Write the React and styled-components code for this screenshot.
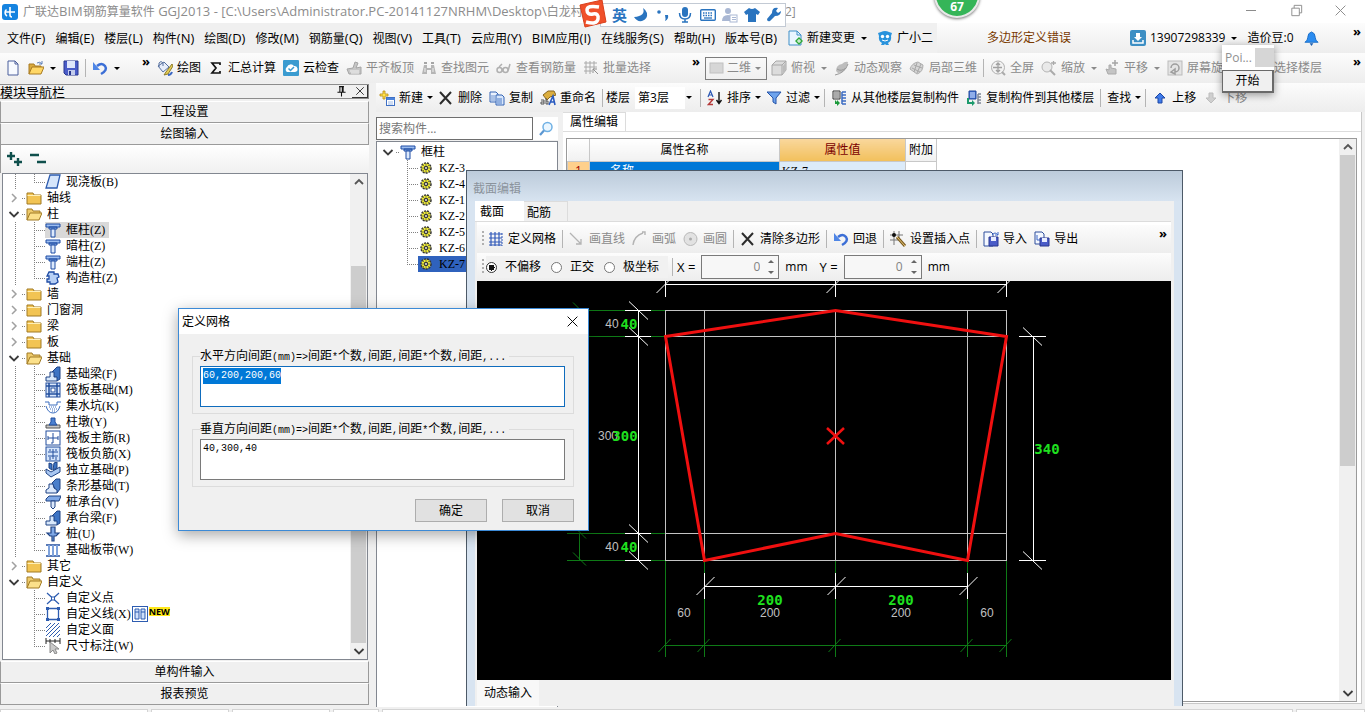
import React, { useEffect, useRef } from 'react'
import styled, { createGlobalStyle, css } from 'styled-components'

// every glyph is drawn on a 16 x 16 box
const glyphs = {
  logo: <><rect width="16" height="16" rx="3" fill="#1583e0" /><path d="M8 3v8a2 2 0 0 0 2 2M3 8h10M4.500 5.500A4 4 0 0 0 5 12" fill="none" stroke="#fff" strokeWidth="1.600" /></>,
  file: <path d="M3 1h7l3 3v11H3z M10 1v3h3" fill="#f7faff" stroke="#4a5f9c" />,
  open: <><path d="M1 14V4h5l1 2h6v2" fill="#d9a93c" stroke="#a87b22" /><path d="M1 14l3-7h12l-3 7z" fill="#ffd766" stroke="#a87b22" /><path d="M9 3q3-2 5 1M14 1v3h-3" fill="none" stroke="#5d7fb8" /></>,
  save: <><path d="M1 1h14v14H3l-2-2z" fill="#4a5cc8" stroke="#28378f" /><path d="M4 1h8v7H4z" fill="#dfe6fb" /><path d="M5 10h7v5H5z" fill="#c3ccec" /><path d="M6 11h2v4H6z" fill="#28378f" /></>,
  undo: <><path d="M5 6q5-4 8 0t-4 8" fill="none" stroke="#3c6fd6" strokeWidth="2.500" /><path d="M1 2v8h7z" fill="#4f86e6" /></>,
  paint: <><path d="M1 6l6-4 5 5-6 5z" fill="#e8eefa" stroke="#56709f" /><path d="M2 7V3q2-3 4 0v3" fill="none" stroke="#56709f" /><path d="M15 4l-6 8-2 3 4-1 5-8z" fill="#e6cf56" stroke="#8c7a2a" /><path d="M11 15q3 0 4-3" stroke="#3966c4" strokeWidth="2" fill="none" /></>,
  sigma: <path d="M12 5V3H4l4 5-4 5h8v-2" fill="none" stroke="#111" strokeWidth="1.700" />,
  cloud: <><rect width="16" height="16" rx="1" fill="#3a9bd0" /><path d="M4 12a3 3 0 0 1 0-5 4 4 0 0 1 7-1 3 3 0 0 1 1 6z" fill="#fff" /><path d="M5.500 8.500l2 2 3.500-3.500" stroke="#3a9bd0" strokeWidth="1.500" fill="none" /></>,
  slab: <><path d="M1 9l6-1 2-6 3 1-2 5 5-1v7H3z" fill="#c6c6c6" stroke="#a5a5a5" /><path d="M4 11h9M5 13h8" stroke="#f4f4f4" /></>,
  binoc: <><path d="M3 5h3v3h4V5h3l2 9h-5v-4H6v4H1z" fill="#b5b5b5" /><path d="M3 2h3v2H3zM10 2h3v2h-3z" fill="#a5a5a5" /><path d="M4 8v4M12 8v4" stroke="#eee" /></>,
  glasses: <path d="M1 10a2.500 2.500 0 1 0 5 0 2.500 2.500 0 1 0-5 0M7 10a2.500 2.500 0 1 0 5 0 2.500 2.500 0 1 0-5 0M3 7l3-3M12 11l2-7" fill="none" stroke="#b0b0b0" strokeWidth="1.500" />,
  batch: <><path d="M1 3h13M1 7h13M1 11h8M3 1v13M7 1v13M11 1v8" stroke="#aaa" /><path d="M10 9l5 5M10 9v4M10 9h4" stroke="#8f8f8f" /></>,
  plane: <rect x="1" y="3" width="13" height="10" fill="#d6d6d6" stroke="#c0c0c0" />,
  cube: <><path d="M1 5l4-4h10v9l-4 5H1z" fill="#dcdcdc" stroke="#a8a8a8" /><path d="M1 5h10v10M11 5l4-4" fill="none" stroke="#a8a8a8" /><path d="M12 6l3-4v8l-3 3z" fill="#bcbcbc" /></>,
  orbit: <><path d="M2 11q0-6 6-7 3-3 6-2 0 3-2 5-2 6-8 6z" fill="#bdbdbd" /><path d="M1 15q10-2 13-11M3 9q4 3 9-1" stroke="#989898" fill="none" /></>,
  local: <><path d="M1 9q2-6 8-7l5 3q0 7-6 9z" fill="#d6d6d6" stroke="#adadad" /><path d="M3 8l8 4M5 5l8 3M8 3l-3 9M12 4l-4 9" stroke="#a8a8a8" /></>,
  fit: <><circle cx="8" cy="7.500" r="6.500" fill="#f2f2f2" stroke="#b0b0b0" /><path d="M8 3v9M3 7.500h9M6 5l2-2 2 2M6 10l2 2 2-2" fill="none" stroke="#a0a0a0" strokeWidth="1.300" /><path d="M12 12l3 3" stroke="#aaa" strokeWidth="2" /></>,
  zoom: <><circle cx="6" cy="7" r="5" fill="#e9e9e9" stroke="#b5b5b5" /><path d="M9 10l5 5" stroke="#aaa" strokeWidth="2" /><path d="M10 3h5M12.500 1v4" stroke="#aaa" strokeWidth="1.300" /></>,
  pan: <><path d="M2 9l3 1V5h2v3l5 1v5H4z" fill="#c4c4c4" stroke="#aaa" /><path d="M8 3h6M11 0v6" stroke="#a5a5a5" strokeWidth="1.500" /></>,
  rotate: <><rect x="1" y="1" width="14" height="14" fill="#e4e4e4" stroke="#bbb" /><path d="M4 8a4 4 0 1 1 4 4M8 9v5l-4-2z" fill="none" stroke="#9d9d9d" strokeWidth="1.500" /></>,
  add: <><path d="M4 1h2v3h3v2H6v3H4V6H1V4h3z" fill="#ffe34d" stroke="#b98b13" strokeWidth=".8" /><rect x="7.500" y="7.500" width="8" height="8" fill="#fff" stroke="#3f70c4" /><path d="M8 8h8v2H8z" fill="#4b83db" /><path d="M9 12h5M9 14h5" stroke="#9cb9e6" /></>,
  del: <path d="M2 2l11 12M13 2L2 14" stroke="#2c2c2c" strokeWidth="2" />,
  copy: <><path d="M1 2h6l2 2v8H1z" fill="#eaf1fd" stroke="#3464b4" /><path d="M2 6h4M2 8h4M2 10h4" stroke="#6d93d0" /><path d="M7 5h6l2 2v8H7z" fill="#d8e6fb" stroke="#3464b4" /><path d="M8 9h5M8 11h5M8 13h5" stroke="#4a7ac6" /></>,
  rename: <><path d="M3 5l5-4h6l2 4-6 2-3 3z" fill="#dcae3e" stroke="#876620" /><path d="M1 10h3v4H1v-2h3M6 8v6h2v-3H6" fill="none" stroke="#555" /><path d="M9 15l4-9 2 9M10 12h5" fill="none" stroke="#2a5bc0" strokeWidth="1.600" /></>,
  sort: <><path d="M1 7l2.500-6L6 7M2 5h3" fill="none" stroke="#2a57b4" strokeWidth="1.200" /><path d="M1.500 9.500H6l-4.500 5H6" fill="none" stroke="#b53a3a" strokeWidth="1.400" /><path d="M12 2v11M9.500 10l2.500 3.500 2.500-3.500" fill="none" stroke="#111" strokeWidth="1.400" /></>,
  funnel: <path d="M1 2h14L10 8v6l-3-2V8z" fill="#6ea3ec" stroke="#2453a8" />,
  copyFrom: <><path d="M2 1h7v8H2z" fill="#eee" stroke="#333" /><path d="M3 3h5M3 5h5M3 7h5" stroke="#666" /><path d="M4 10v4h2v2l3-3-3-3v2z" fill="#1c9a3c" /><path d="M11 2h4M11 5h4M11 8h4M11 11h4M11 14h4M11 2v12" stroke="#3c6cc2" strokeWidth="1.500" /></>,
  copyTo: <><path d="M3 1h7v8H3z" fill="#4274d4" stroke="#20479b" /><path d="M4 3h5M4 5h5M4 7h5" stroke="#dce8ff" /><path d="M1 8h2v4h3v-2l3 3-3 3v-2H1z" fill="#1c9a6c" /><path d="M12 4h3M12 7h3M12 10h3M12 13h3M12 4v10" stroke="#7d8796" strokeWidth="1.500" /></>,
  up: <path d="M8 3l5 5h-3v5H6V8H3z" fill="#3f7bea" stroke="#1d46a4" />,
  down: <path d="M8 13L3 8h3V3h4v5h3z" fill="#cfcfcf" stroke="#bdbdbd" />,
  search: <><circle cx="9.500" cy="6" r="4.500" fill="#eaf6ff" stroke="#6fb0e4" strokeWidth="1.500" /><path d="M6 9.500L2 14" stroke="#5b97d2" strokeWidth="2.200" /></>,
  grid: <><path d="M1 3h13M1 7h13M1 11h13M1 14h13M3 1v14M7 1v14M11 1v14" stroke="#3159b8" strokeWidth="1.200" /><path d="M14 2v13" stroke="#3159b8" strokeDasharray="2 1" /></>,
  line: <path d="M1 2l11 11M12 8v5H7" fill="none" stroke="#b4b4b4" strokeWidth="1.300" />,
  arc: <path d="M1 14q1-9 10-12M10 1h3v3" fill="none" stroke="#b4b4b4" strokeWidth="1.400" />,
  circle: <><circle cx="7.500" cy="8" r="6.500" fill="#e2e2e2" stroke="#b9b9b9" /><circle cx="7.500" cy="8" r="1.500" fill="#aaa" /></>,
  insertPt: <><path d="M0 4h13M0 9h9M4 0v14M9 0v8" stroke="#777" /><circle cx="4" cy="4" r="2" fill="#111" /><path d="M7 6l8 9" stroke="#7a5a1e" strokeWidth="3" /><path d="M7 6l8 9" stroke="#e8c878" /></>,
  importDoc: <><path d="M1 1h7l2 2v12H1z" fill="#f4f8ff" stroke="#2f4f9c" /><path d="M6 6h9v9H6z" fill="#4a5cc8" stroke="#28378f" /><path d="M8 6h5v4H8z" fill="#e8edff" /><path d="M9 4q3-4 6 0M15 1v3h-3" fill="none" stroke="#3a67c8" /></>,
  exportDoc: <><path d="M1 1h7l2 2v10H1z" fill="#f4f8ff" stroke="#2f4f9c" /><path d="M3 4v5h4" fill="none" stroke="#3a67c8" /><path d="M6 7h9v8H6z" fill="#4a5cc8" stroke="#28378f" /><path d="M8 7h5v4H8z" fill="#e8edff" /></>,
  docPlus: <><path d="M2 1h8l4 4v10H2z" fill="#eaf6ff" stroke="#3f8fc8" /><path d="M10 1v4h4" fill="none" stroke="#3f8fc8" /><path d="M12 7l4 4-4 4-4-4z" fill="#2fa83a" /><path d="M12 9v4M10 11h4" stroke="#fff" /></>,
  robot: <><path d="M1 3l3-1q4-2 8 0l3 1-1 3q1 5-3 7l1 2H9l-1-1-1 1H4l1-2q-4-2-3-7z" fill="#2a93dc" /><circle cx="5.500" cy="6.500" r="1.700" fill="#fff" /><circle cx="10.500" cy="6.500" r="1.700" fill="#fff" /><path d="M5 10q3 2 6 0" stroke="#fff" fill="none" /></>,
  account: <><rect width="16" height="16" rx="2" fill="#3d8fc4" /><path d="M6 3h4v4h2l-4 4-4-4h2z" fill="#fff" /><path d="M3 10v3h10v-3" fill="none" stroke="#fff" strokeWidth="1.500" /></>,
  bell: <><path d="M8 1q4 1 4 6 0 3 3 5H1q3-2 3-5 0-5 4-6z" fill="#2b8cf0" stroke="#1d6fc8" /><path d="M6 13h4l-2 3z" fill="#1d5fb0" /></>,
  folder: <><path d="M1 3h6l1 2h7v9H1z" fill="#f2c453" stroke="#a17a24" /><path d="M1.500 5.500h13" stroke="#fff0b8" /></>,
  folderOpen: <><path d="M1 14V3h5l1 2h7v2" fill="#eecb6c" stroke="#a17a24" /><path d="M1 14l3-7h12l-3 7z" fill="#fbe08a" stroke="#a17a24" /></>,
  board: <path d="M5 1h10l-3 13H1z" fill="#d6e6fb" stroke="#2d5cb0" strokeWidth="1.300" />,
  column: <><path d="M1 2h14v3H1z M4 5h8v2H4z" fill="#9cbdf0" stroke="#1f4ca4" /><path d="M6 7h4v8H6z" fill="#dce9fc" stroke="#1f4ca4" /></>,
  gouzao: <path d="M4 2h5v2h4l1 3-2 1 1 4-3 2H5v-2H2V9h2V6H2z" fill="#b7d0f5" stroke="#1f4ca4" strokeWidth="1.300" />,
  beam: <><path d="M6 7l6-6h3v12l-3 2z" fill="#3d74c4" stroke="#1f4384" /><path d="M1 15v-4h4V6h4v5h3v4z" fill="#d8e8fb" stroke="#1f4384" /></>,
  raft: <><rect x="1" y="1" width="14" height="14" fill="#dbe8fb" stroke="#234f9e" /><path d="M4 1v14M12 1v14M1 4h14M1 12h14" stroke="#234f9e" strokeWidth="1.500" /><rect x="6" y="6" width="4" height="4" fill="#fff" stroke="#234f9e" /></>,
  pit: <><path d="M0 4h4v3h8V4h4M1 8q2 7 7 7t7-7" fill="none" stroke="#3d6fc0" /><path d="M4 9h8M5 11h7M7 13h3" stroke="#3d6fc0" strokeDasharray="1 1" /></>,
  pier: <><path d="M1 11h14v3H1z" fill="#c6c6c6" stroke="#555" /><path d="M4 11l2-3V4h4v4l2 3z" fill="#4b80d0" stroke="#234f9e" /></>,
  rebarMain: <><rect x="1" y="1" width="14" height="14" fill="#fff" stroke="#234f9e" /><path d="M3 8h10M8 3v10M3 6v4M13 6v4M6 13h2" stroke="#234f9e" fill="none" /></>,
  rebarNeg: <><rect x="1" y="1" width="14" height="14" fill="#d5e5fb" stroke="#234f9e" /><path d="M3 6h10M3 10h10M8 3v10M5 3v2M11 3v2M5 11v3M11 11v3" stroke="#234f9e" /></>,
  isolated: <><path d="M1 7l5 3 9-5v5l-9 5-5-4z" fill="#a9c7f2" stroke="#1f4384" /><path d="M4 1l3 1v6l-3-2zM9 1l3-1v6L8 8z" fill="#3d74c4" stroke="#1f4384" /></>,
  strip: <><path d="M7 5l4-4h4v10l-3 4z" fill="#4a7fcb" stroke="#1f4384" /><path d="M1 15v-3l3-2V6h4l1 4 3 2v3z" fill="#dce9fc" stroke="#1f4384" /></>,
  pileCap: <><path d="M1 5l3-3h12l-2 5H1z" fill="#7fa8e6" stroke="#1f4384" /><path d="M6 7h4v6l-2 2-2-2z" fill="#dce9fc" stroke="#1f4384" /></>,
  pile: <path d="M6 1h4v6h4l-3 3H9v5H7v-5H5L2 7h4z" fill="#7fa8e6" stroke="#1f4384" strokeWidth="1.200" />,
  band: <><path d="M1 3h14M1 14h14" stroke="#234f9e" strokeWidth="1.500" /><path d="M4 3v11M8 3v11M12 3v11" stroke="#7fa3dc" strokeWidth="2" /></>,
  point: <><path d="M2 3l12 11M14 3L2 14" stroke="#2d5cb0" strokeWidth="1.200" /><rect x="6.500" y="7" width="3" height="3" fill="#fff" stroke="#2d5cb0" /></>,
  polyline: <><path d="M2.500 2.500h11v11h-11z" fill="none" stroke="#2d5cb0" strokeWidth="1.300" /><path d="M1 1h3v3H1zM12 1h3v3h-3zM1 12h3v3H1zM12 12h3v3h-3z" fill="#2d5cb0" /></>,
  hatch: <path d="M1 6l5-5M1 10l9-9M1 14l13-13M4 15L15 4M8 15l7-7M12 15l3-3" stroke="#2d5cb0" />,
  dimension: <><path d="M1 3h14M1 0v6M15 0v6M5 1v4M10 1v4" stroke="#222" /><path d="M5 4v11l3-3 2 4 2-1-2-4h4z" fill="#c9c9c9" stroke="#8a8a8a" /></>,
  twin: <><rect x=".5" y=".5" width="15" height="15" fill="#fff" stroke="#2d5cb0" /><path d="M3 3h4v10H3zM9 3h4v10H9z" fill="#cfe0fa" stroke="#2d5cb0" /><path d="M3 6h4M9 6h4" stroke="#2d5cb0" /></>,
  gear: <><circle cx="8" cy="8" r="5" fill="#f4f02c" stroke="#333" strokeWidth="1.500" strokeDasharray="2 1" /><path d="M8 3v10M3 8h10M4.500 4.500l7 7M11.500 4.500l-7 7" stroke="#555" strokeWidth=".8" /><circle cx="8" cy="8" r="1.500" fill="#fff" stroke="#222" /></>,
  plusPlus: <path d="M0 5h8M4 1v8M7 11h8M11 7v8" stroke="#0f4f4c" strokeWidth="2.400" />,
  minusMinus: <path d="M0 4h9M7 11h9" stroke="#0f4f4c" strokeWidth="2.400" />,
  pin: <path d="M5 2h6M6 2v7M10 2v7M9 2v7M3 9h10M8 9v5" fill="none" stroke="#111" strokeWidth="1.300" />,
  close: <path d="M2 2l12 12M14 2L2 14" stroke="currentColor" strokeWidth="1.200" />,
  minimize: <path d="M3 8.500h10" stroke="currentColor" />,
  restore: <path d="M3 5.500h8v8H3zM5.500 5.500v-3h8v8h-2.500" fill="none" stroke="currentColor" />,
  chevRight: <path d="M6 4l4 4-4 4" fill="none" stroke="#a0a0a0" strokeWidth="1.500" />,
  chevDown: <path d="M3.500 6L8 10.500 12.500 6" fill="none" stroke="#3c3c3c" strokeWidth="1.800" />,
  chevUp: <path d="M4 10l4-4 4 4" fill="none" stroke="#555" strokeWidth="1.800" />,
  moon: <path d="M10 1q3 8-9 9 3 5 8 4 6-2 5-8-1-3-4-5z" fill="#2a74bf" />,
  comma: <><circle cx="4" cy="5" r="1.800" fill="#2a74bf" /><path d="M10 8h3q1 4-3 6 1-2 0-6z" fill="#2a74bf" /></>,
  mic: <><rect x="5" y="0" width="6" height="10" rx="3" fill="#2a74bf" /><path d="M2.500 6q0 6 5.500 6t5.500-6M8 12v3M5 15h6" fill="none" stroke="#2a74bf" strokeWidth="1.500" /></>,
  keyboard: <><rect x=".7" y="2.700" width="14.600" height="10.600" rx="1" fill="#fff" stroke="#2a74bf" strokeWidth="1.400" /><path d="M3 6h10M3 8.500h10" stroke="#2a74bf" strokeWidth="1.500" strokeDasharray="1.500 1" /><path d="M4 11h8" stroke="#2a74bf" strokeWidth="1.300" /></>,
  person: <><circle cx="6" cy="4" r="3" fill="#a9b7d3" /><path d="M0 14q0-6 6-6t5 6z" fill="#a9b7d3" /><rect x="8" y="8" width="7" height="7" fill="#fff" stroke="#a9b7d3" /><path d="M10 10.500h4M10 12.500h4" stroke="#a9b7d3" /></>,
  shirt: <path d="M5 1q3 2 6 0l5 4-2 3-2-1v8H4V7L2 8 0 5z" fill="#2a74bf" />,
  wrench: <path d="M15 4l-3 2-2-2 2-3q-6-1-6 5l-5 6q0 3 3 2l5-5q6 0 6-5z" fill="#2a74bf" />,
}

function Glyph({ name, size = 16 }) {
  return <svg width={size} height={size} viewBox="0 0 16 16" aria-hidden="true">{glyphs[name]}</svg>
}

// puts the ascii runs of a mixed text in a face of their own
function Mixed({ face: Face, children }) {
  return children.split(/([\x20-\x7e]+)/).filter(Boolean).map((run, i) => (
    /[\x20-\x7e]/.test(run) ? <Face key={i}>{run}</Face> : run
  ))
}

const menus = ['文件(F)', '编辑(E)', '楼层(L)', '构件(N)', '绘图(D)', '修改(M)', '钢筋量(Q)', '视图(V)', '工具(T)', '云应用(Y)', 'BIM应用(I)', '在线服务(S)', '帮助(H)', '版本号(B)']

const navTree = [
  { text: '现浇板(B)', icon: 'board', leaf: true, last: true, rail: true },
  { text: '轴线' },
  { text: '柱', open: true },
  { text: '框柱(Z)', icon: 'column', leaf: true, rail: true, current: true },
  { text: '暗柱(Z)', icon: 'column', leaf: true, rail: true },
  { text: '端柱(Z)', icon: 'column', leaf: true, rail: true },
  { text: '构造柱(Z)', icon: 'gouzao', leaf: true, rail: true, last: true },
  { text: '墙' },
  { text: '门窗洞' },
  { text: '梁' },
  { text: '板' },
  { text: '基础', open: true },
  { text: '基础梁(F)', icon: 'beam', leaf: true, rail: true },
  { text: '筏板基础(M)', icon: 'raft', leaf: true, rail: true },
  { text: '集水坑(K)', icon: 'pit', leaf: true, rail: true },
  { text: '柱墩(Y)', icon: 'pier', leaf: true, rail: true },
  { text: '筏板主筋(R)', icon: 'rebarMain', leaf: true, rail: true },
  { text: '筏板负筋(X)', icon: 'rebarNeg', leaf: true, rail: true },
  { text: '独立基础(P)', icon: 'isolated', leaf: true, rail: true },
  { text: '条形基础(T)', icon: 'strip', leaf: true, rail: true },
  { text: '桩承台(V)', icon: 'pileCap', leaf: true, rail: true },
  { text: '承台梁(F)', icon: 'beam', leaf: true, rail: true },
  { text: '桩(U)', icon: 'pile', leaf: true, rail: true },
  { text: '基础板带(W)', icon: 'band', leaf: true, rail: true, last: true },
  { text: '其它' },
  { text: '自定义', open: true },
  { text: '自定义点', icon: 'point', leaf: true },
  { text: '自定义线(X)', icon: 'polyline', leaf: true, isNew: true },
  { text: '自定义面', icon: 'hatch', leaf: true },
  { text: '尺寸标注(W)', icon: 'dimension', leaf: true, last: true },
]

const members = ['KZ-3', 'KZ-4', 'KZ-1', 'KZ-2', 'KZ-5', 'KZ-6', 'KZ-7']

function Tool({ icon, text, caret, disabled }) {
  return (
    <ToolButton disabled={disabled}>
      {icon && <Glyph name={icon} />}
      {text}
      {caret && <Caret $wide={caret === 'wide'} $iconOnly={!text} />}
    </ToolButton>
  )
}

function Scroll({ before, thumb, after }) {
  return (
    <ScrollBar>
      <Glyph name="chevUp" />
      <Track $grow={before} />
      <Thumb $grow={thumb} />
      <Track $grow={after} />
      <Glyph name="chevDown" />
    </ScrollBar>
  )
}

function TopBars() {
  return (
    <>
      <TitleBar>
        <Glyph name="logo" />
        <TitlePath><Mixed face={Wide}>广联达BIM钢筋算量软件 GGJ2013 - [C:\Users\Administrator.PC-20141127NRHM\Desktop\白龙村-</Mixed></TitlePath>
        <span>2]</span>
        <WindowButtons>
          <PlainButton aria-label="最小化"><Glyph name="minimize" /></PlainButton>
          <PlainButton aria-label="还原"><Glyph name="restore" size={15} /></PlainButton>
          <PlainButton aria-label="关闭"><Glyph name="close" size={13} /></PlainButton>
        </WindowButtons>
      </TitleBar>
      <MenuBar>
        <Menus>
          {menus.map((m) => <PlainButton key={m}><span><Mixed face={Wide}>{m}</Mixed></span></PlainButton>)}
          <Tool icon="docPlus" text="新建变更" caret="wide" />
          <Tool icon="robot" text="广小二" />
        </Menus>
        <Notice>多边形定义错误</Notice>
        <Account>
          <Tool icon="account" text="13907298339" caret="wide" />
          <span>造价豆:0</span>
          <PlainButton aria-label="消息"><Glyph name="bell" size={15} /></PlainButton>
          <More>»</More>
        </Account>
      </MenuBar>
      <ToolRow>
        <FileTools>
          <Tool icon="file" />
          <Tool icon="open" caret="wide" />
          <Tool icon="save" />
          <Separator />
          <Tool icon="undo" caret="wide" />
          <More>»</More>
        </FileTools>
        <DrawTools>
          <Tool icon="paint" text="绘图" />
          <Tool icon="sigma" text="汇总计算" />
          <Tool icon="cloud" text="云检查" />
          <Tool icon="slab" text="平齐板顶" disabled />
          <Tool icon="binoc" text="查找图元" disabled />
          <Tool icon="glasses" text="查看钢筋量" disabled />
          <Tool icon="batch" text="批量选择" disabled />
          <More>»</More>
        </DrawTools>
        <ViewTools>
          <ModeBox disabled><Glyph name="plane" />二维<Caret $wide /></ModeBox>
          <Tool icon="cube" text="俯视" caret="wide" disabled />
          <Tool icon="orbit" text="动态观察" disabled />
          <Tool icon="local" text="局部三维" disabled />
          <Separator />
          <Tool icon="fit" text="全屏" disabled />
          <Tool icon="zoom" text="缩放" caret="wide" disabled />
          <Tool icon="pan" text="平移" caret="wide" disabled />
          <Tool icon="rotate" text="屏幕旋转" caret="wide" disabled />
          <Tool icon="plane" text="选择楼层" disabled />
          <More>»</More>
        </ViewTools>
      </ToolRow>
    </>
  )
}

function Navigator() {
  return (
    <NavPanel>
      <NavHeader>
        <span>模块导航栏</span>
        <Glyph name="pin" size={13} />
        <NavClose aria-label="关闭导航栏"><Glyph name="close" size={10} /></NavClose>
      </NavHeader>
      <NavButton>工程设置</NavButton>
      <NavButton>绘图输入</NavButton>
      <NavTools>
        <PlainButton aria-label="全部展开"><Glyph name="plusPlus" /></PlainButton>
        <PlainButton aria-label="全部折叠"><Glyph name="minusMinus" /></PlainButton>
      </NavTools>
      <NavTree>
        <TreeList>
          {navTree.map((n) => (
            <TreeRow key={n.text}>
              {n.leaf
                ? <><Rail $shown={n.rail} /><Branch $last={n.last} /></>
                : <><Toggle aria-label={n.text}><Glyph name={n.open ? 'chevDown' : 'chevRight'} /></Toggle><Dash /></>}
              <TreeLabel $current={n.current}>
                <Glyph name={n.leaf ? n.icon : n.open ? 'folderOpen' : 'folder'} />
                <span><Mixed face={Song}>{n.text}</Mixed></span>
              </TreeLabel>
              {n.isNew && <><Glyph name="twin" /><NewTag>NEW</NewTag></>}
            </TreeRow>
          ))}
        </TreeList>
        <Scroll before={75} thumb={375} after={0} />
      </NavTree>
      <NavButton>单构件输入</NavButton>
      <NavButton>报表预览</NavButton>
    </NavPanel>
  )
}

function Workspace() {
  return (
    <Work>
      <MemberTools>
        <Tool icon="add" text="新建" caret />
        <Tool icon="del" text="删除" />
        <Tool icon="copy" text="复制" />
        <Tool icon="rename" text="重命名" />
        <Separator />
        <FloorLabel>
          楼层
          <FloorSelect defaultValue="3"><option value="3">第3层</option></FloorSelect>
          <Caret />
        </FloorLabel>
        <Separator />
        <Tool icon="sort" text="排序" caret />
        <Tool icon="funnel" text="过滤" caret />
        <Separator />
        <Tool icon="copyFrom" text="从其他楼层复制构件" />
        <Tool icon="copyTo" text="复制构件到其他楼层" />
        <Separator />
        <Tool text="查找" caret />
        <Separator />
        <Tool icon="up" text="上移" />
        <Tool icon="down" text="下移" disabled />
      </MemberTools>
      <Panes>
        <MemberPane>
          <SearchRow>
            <SearchInput aria-label="搜索构件" placeholder="搜索构件..." />
            <PlainButton aria-label="搜索"><Glyph name="search" /></PlainButton>
          </SearchRow>
          <MemberTree>
            <TreeRow>
              <Toggle aria-label="框柱"><Glyph name="chevDown" /></Toggle><Dash />
              <TreeLabel><Glyph name="column" /><span>框柱</span></TreeLabel>
            </TreeRow>
            {members.map((m) => (
              <TreeRow key={m}>
                <MemberIndent />
                <Branch $last={m === 'KZ-7'} />
                <MemberLabel $selected={m === 'KZ-7'}>
                  <Glyph name="gear" />
                  <Song>{m}</Song>
                </MemberLabel>
              </TreeRow>
            ))}
          </MemberTree>
        </MemberPane>
        <PropertyPane>
          <TabStrip><Tab $active>属性编辑</Tab></TabStrip>
          <PropertyFrame>
            <div>
              <PropertyTable>
                <thead>
                  <tr><HeadCell $w={22} /><HeadCell $w={190}>属性名称</HeadCell><HeadCell $w={126} $hot>属性值</HeadCell><HeadCell $w={31}>附加</HeadCell></tr>
                </thead>
                <tbody>
                  <tr><IndexCell>1</IndexCell><NameCell>名称</NameCell><ValueCell><Song>KZ-7</Song></ValueCell><td /></tr>
                </tbody>
              </PropertyTable>
            </div>
            <Scroll before={0} thumb={310} after={218} />
          </PropertyFrame>
        </PropertyPane>
      </Panes>
    </Work>
  )
}

const columnsX = [665.5, 704.5, 835.5, 967.5, 1006.5]
const rowsY = [310.5, 336.5, 533.5, 560.5]

function SectionDrawing() {
  return (
    <Drawing viewBox="477 281 694 399" preserveAspectRatio="xMinYMin slice">
      <g stroke="#0e7a16" fill="none">
        {columnsX.map((x) => <path key={x} d={`M${x} 560V657M${x - 7} 652l12 -13`} />)}
        <path d="M665 645.500H1007" />
        {rowsY.map((y) => <path key={y} d={`M567 ${y}H665M573 ${y - 8}l13 13`} />)}
        <path d="M579.500 310V336M579.500 533V560" />
      </g>
      <g stroke="#c4c4c4" fill="none">
        {columnsX.map((x) => <path key={x} d={`M${x} 310V561`} />)}
        {rowsY.map((y) => <path key={y} d={`M665 ${y}H1007`} />)}
      </g>
      <g stroke="#fff" fill="none">
        <path d="M665 284.500H1007M638.500 310V561M1033.500 336V561M704 586.500H968" />
        {[665.5, 835.5, 1006.5].map((x) => <path key={x} d={`M${x} 281V297M${x - 9} 293l16 -16`} />)}
        {rowsY.map((y) => <path key={y} d={`M625 ${y}H651M629 ${y - 9}l19 18`} />)}
        {[336.5, 560.5].map((y) => <path key={y} d={`M1019 ${y}H1046M1023 ${y - 9}l19 18`} />)}
        {[704.5, 835.5, 967.5].map((x) => <path key={x} d={`M${x} 573V599M${x - 8} 595l18 -18`} />)}
      </g>
      <path d="M665.500 336.500L835.500 310.500L1006.500 336.500L967.500 560.500L835.500 533.500L704.500 560.500Z" fill="none" stroke="#f01010" strokeWidth="3" />
      <path d="M827 428l17 16M844 428l-17 16" stroke="#f01010" strokeWidth="2.500" />
      <PlainDims>
        <text x="612" y="328">40</text>
        <text x="608" y="440">300</text>
        <text x="612" y="551">40</text>
        <text x="684" y="617">60</text>
        <text x="770" y="617">200</text>
        <text x="901" y="617">200</text>
        <text x="987" y="617">60</text>
      </PlainDims>
      <BoldDims>
        <text x="629" y="329">40</text>
        <text x="625" y="441">300</text>
        <text x="629" y="552">40</text>
        <text x="1047" y="454">340</text>
        <text x="770" y="605">200</text>
        <text x="901" y="605">200</text>
      </BoldDims>
    </Drawing>
  )
}

function Offset({ axis }) {
  return (
    <OffsetLabel>
      <Wide>{axis} =</Wide>
      <Spin>
        <input defaultValue="0" disabled />
        <Arrows><Caret $flip /><Caret /></Arrows>
      </Spin>
      <span>mm</span>
    </OffsetLabel>
  )
}

function SectionEditor() {
  return (
    <SectionWindow>
      <SectionTitle>截面编辑</SectionTitle>
      <SectionBody>
        <SectionTabs>
          <Tab $active>截面</Tab>
          <Tab>配筋</Tab>
        </SectionTabs>
        <SectionTools>
          <Grip />
          <Tool icon="grid" text="定义网格" />
          <Separator />
          <Tool icon="line" text="画直线" disabled />
          <Tool icon="arc" text="画弧" disabled />
          <Tool icon="circle" text="画圆" disabled />
          <Separator />
          <Tool icon="del" text="清除多边形" />
          <Separator />
          <Tool icon="undo" text="回退" />
          <Separator />
          <Tool icon="insertPt" text="设置插入点" />
          <Separator />
          <Tool icon="importDoc" text="导入" />
          <Tool icon="exportDoc" text="导出" />
          <More>»</More>
        </SectionTools>
        <OffsetRow>
          <Grip />
          <Modes>
            <label><Radio type="radio" name="offset" defaultChecked />不偏移</label>
            <label><Radio type="radio" name="offset" />正交</label>
            <label><Radio type="radio" name="offset" />极坐标</label>
          </Modes>
          <Separator />
          <Offset axis="X" />
          <Offset axis="Y" />
        </OffsetRow>
        <SectionDrawing />
        <DynamicBar><DynamicButton>动态输入</DynamicButton></DynamicBar>
      </SectionBody>
    </SectionWindow>
  )
}

function GridDialog() {
  const first = useRef(null)

  useEffect(() => {
    first.current.focus()
    first.current.select()
  }, [])

  return (
    <GridWindow role="dialog" aria-label="定义网格">
      <GridTitle>
        定义网格
        <PlainButton aria-label="关闭"><Glyph name="close" size={13} /></PlainButton>
      </GridTitle>
      <GridBody>
        <Group>
          <legend><label htmlFor="hgap"><Mixed face={Half}>水平方向间距(mm)=&gt;间距*个数,间距,间距*个数,间距,...</Mixed></label></legend>
          <GapInput id="hgap" ref={first} defaultValue="60,200,200,60" spellCheck="false" />
        </Group>
        <Group>
          <legend><label htmlFor="vgap"><Mixed face={Half}>垂直方向间距(mm)=&gt;间距*个数,间距,间距*个数,间距,...</Mixed></label></legend>
          <GapInput id="vgap" defaultValue="40,300,40" spellCheck="false" />
        </Group>
        <Actions>
          <ActionButton>确定</ActionButton>
          <ActionButton>取消</ActionButton>
        </Actions>
      </GridBody>
    </GridWindow>
  )
}

function InputMethodBar() {
  return (
    <ImeBar>
      <ImeLogo viewBox="0 0 28 28" aria-hidden="true">
        <path d="M1 5L23 0l4 22L6 27z" fill="#f0502a" stroke="#d8401c" strokeLinejoin="round" />
        <path d="M20 7Q8 5 8 10t6 4 5 5-12 3" fill="none" stroke="#fff" strokeWidth="3.500" />
      </ImeLogo>
      <b>英</b>
      {['moon', 'comma', 'mic', 'keyboard', 'person', 'shirt', 'wrench'].map((n) => <Glyph key={n} name={n} />)}
    </ImeBar>
  )
}

export default function App() {
  return (
    <Shell>
      <GlobalStyle />
      <TopBars />
      <Main>
        <Navigator />
        <Workspace />
      </Main>
      <StatusBar><Status $w={148} /><Status $w={78} /><Status $w={98} /><Status $w={46} /><Status /><Status $w={69} /></StatusBar>
      <SectionEditor />
      <GridDialog />
      <InputMethodBar />
      <SpeedBall>67</SpeedBall>
      <PointWindow>
        <PointTitle>Poi...<PointClose aria-label="关闭" /></PointTitle>
        <StartButton>开始</StartButton>
      </PointWindow>
    </Shell>
  )
}

const GlobalStyle = createGlobalStyle`
    * { box-sizing: border-box; }
    body { margin: 0; overflow: hidden; }
    body, button, input, select, textarea {
        font-family: 'Open Sans', 'Noto Sans CJK SC', sans-serif;
        font-size: 12px;
        line-height: 16px;
        color: #000;
    }
    button { border: 0; padding: 0; background: none; white-space: nowrap; }
    svg { flex: none; display: block; }
`

const Shell = styled.div`
    position: relative;
    display: flex;
    flex-direction: column;
    height: 100vh;
    overflow: hidden;
    background: #f0f0f0;
`

const Half = styled.span`
    font-family: 'Liberation Mono', monospace;
    font-size: 10px;
`

const Song = styled.span`
    font-family: 'Liberation Serif', serif;
`

const Wide = styled.span`
    font-size: 13px;
`

const PlainButton = styled.button`
    display: flex;
    align-items: center;
    color: inherit;
`

const Caret = styled.i`
    width: 8px;
    display: flex;
    justify-content: center;
    &::after {
        content: '';
        border: 3px solid transparent;
        border-bottom-width: 0;
        border-top-color: currentColor;
        ${(p) => p.$flip && 'transform: rotate(180deg);'}
    }
`

const ToolButton = styled.button`
    display: flex;
    align-items: center;
    gap: 4px;
    flex: none;
    &:disabled { color: #8a8a8a; }
    ${Caret} {
        justify-content: flex-end;
        width: ${(p) => (p.$box ? 10 : 12)}px;
        margin-left: -4px;
    }
`

const Separator = styled.i`
    width: 1px;
    height: 18px;
    margin: 0 -1px;
    flex: none;
    background: #b4b4b4;
`

const More = styled.button`
    margin-left: auto;
    align-self: flex-start;
    font-weight: 700;
    font-size: 13px;
`

const bar = css`
    display: flex;
    align-items: center;
    flex: none;
    background: linear-gradient(#fcfcfc, #ededed);
`

const TitleBar = styled.header`
    display: flex;
    align-items: center;
    flex: none;
    height: 23px;
    padding-left: 2px;
    background: #fff;
    color: #8c8c8c;
`

const TitlePath = styled.span`
    flex: 0 0 767px;
    padding-left: 5px;
    white-space: nowrap;
`

const WindowButtons = styled.div`
    display: flex;
    align-items: center;
    gap: 30px;
    height: 20px;
    align-self: flex-start;
    margin-left: auto;
    padding-right: 18px;
`

const MenuBar = styled.nav`
    display: flex;
    flex: none;
    height: 30px;
`

const Menus = styled.div`
    display: flex;
    align-items: center;
    flex: 0 0 937px;
    gap: 10px;
    padding-left: 7px;
`

const Notice = styled.div`
    ${bar}
    flex: 1 1 187px;
    padding-left: 50px;
    color: #7a3a00;
`

const Account = styled.div`
    ${bar}
    flex: 0 0 241px;
    gap: 10px;
    padding: 0 4px 0 6px;
`

const ToolRow = styled.div`
    ${bar}
    height: 30px;
    padding-right: 4px;
`

const FileTools = styled.div`
    display: flex;
    align-items: center;
    align-self: stretch;
    flex: 0 0 150px;
    gap: 7px;
    padding-left: 5px;
    ${Caret} { margin-left: -4px; }
    ${ToolButton} { gap: 4px; }
`

const DrawTools = styled.div`
    display: flex;
    align-items: center;
    align-self: stretch;
    flex: 0 0 550px;
    gap: 7px;
    padding-left: 7px;
`

const ViewTools = styled.div`
    display: flex;
    align-items: center;
    align-self: stretch;
    flex: 1;
    min-width: 0;
    gap: 7px;
    padding-left: 5px;
`

const ModeBox = styled(ToolButton)`
    width: 62px;
    height: 23px;
    margin-right: -3px;
    padding-left: 3px;
    gap: 2px;
    border: 1px solid #7d7d7d;
`

const Main = styled.main`
    display: flex;
    flex: 1;
    min-height: 0;
`

const NavPanel = styled.aside`
    display: flex;
    flex-direction: column;
    flex: 0 0 369px;
    padding: 1px 0 2px;
`

const NavHeader = styled.div`
    display: flex;
    align-items: center;
    height: 15px;
    margin-bottom: 2px;
    border: 1px solid #8c8c8c;
    border-left: 0;
    span { flex: 1; font-size: 13px; }
`

const NavClose = styled.button`
    display: flex;
    align-items: center;
    justify-content: center;
    width: 16px;
    height: 13px;
    margin-left: 4px;
    border-right: 1px solid #333;
    border-bottom: 1px solid #333;
`

const NavButton = styled.button`
    height: 22px;
    border: 1px solid #9a9a9a;
    border-top-color: #fff;
    background: #f0f0f0;
`

const NavTools = styled.div`
    ${bar}
    height: 28px;
    gap: 7px;
    padding-left: 6px;
    border-left: 1px solid #9a9a9a;
    background: linear-gradient(#fff, #f0f0f0);
`

const NavTree = styled.div`
    display: flex;
    flex: 1;
    min-height: 0;
    margin: 0 1px 1px 2px;
    border: 1px solid #828790;
    background: #fff;
`

const TreeList = styled.ul`
    flex: 1;
    margin: 0;
    padding: 0;
    overflow: hidden;
`

const TreeRow = styled.li`
    display: flex;
    align-items: center;
    height: 16px;
    white-space: nowrap;
`

const dots = (angle) => `repeating-linear-gradient(${angle}, #808080 0 1px, transparent 1px 2px)`

const Rail = styled.i`
    width: 19px;
    height: 16px;
    margin-left: 12px;
    background: ${(p) => (p.$shown ? `${dots('180deg')} 0 0 / 1px 100% no-repeat` : 'none')};
`

const Branch = styled.i`
    width: 11px;
    height: 16px;
    background: ${dots('180deg')} 0 0 / 1px ${(p) => (p.$last ? '8px' : '100%')} no-repeat,
        ${dots('90deg')} 0 8px / 100% 1px no-repeat;
`

const Toggle = styled.button`
    margin-left: 3px;
    width: 16px;
`

const Dash = styled.i`
    width: 4px;
    height: 1px;
    background: ${dots('90deg')};
`

const TreeLabel = styled.div`
    display: flex;
    align-items: center;
    gap: 5px;
    padding-right: ${(p) => (p.$current ? 4 : 1)}px;
    background: ${(p) => (p.$current ? '#d9d9d9' : 'none')};
`

const NewTag = styled.b`
    margin: -6px 0 0 1px;
    background: #ffe81a;
    font-size: 9px;
    line-height: 9px;
`

const ScrollBar = styled.div`
    display: flex;
    flex-direction: column;
    flex: 0 0 17px;
    align-items: center;
    background: #f0f0f0;
`

const Track = styled.i`
    flex: ${(p) => p.$grow} 1 0;
`

const Thumb = styled.i`
    flex: ${(p) => p.$grow} 1 0;
    width: 15px;
    background: #cdcdcd;
`

const Work = styled.section`
    display: flex;
    flex-direction: column;
    flex: 1;
    min-width: 0;
    margin-left: 7px;
`

const MemberTools = styled.div`
    ${bar}
    height: 29px;
    gap: 7px;
    padding-left: 3px;
    ${ToolButton} ${Caret} { width: 10px; margin-right: -2px; }
`

const FloorLabel = styled.label`
    display: flex;
    align-items: center;
    margin-left: -3px;
    margin-right: 1px;
`

const FloorSelect = styled.select`
    appearance: none;
    width: 50px;
    height: 22px;
    margin-left: 5px;
    padding: 0 3px;
    border: 0;
    background: #fff;
`

const Panes = styled.div`
    display: flex;
    flex: 1;
    min-height: 0;
`

const MemberPane = styled.div`
    display: flex;
    flex-direction: column;
    flex: 0 0 182px;
    padding-top: 5px;
`

const SearchRow = styled.div`
    display: flex;
    height: 24px;
    ${PlainButton} { width: 25px; justify-content: center; background: #fff; height: 23px; }
`

const SearchInput = styled.input`
    width: 157px;
    height: 23px;
    padding: 0 2px;
    border: 1px solid #6e6e6e;
    &::placeholder { color: #777; }
`

const MemberTree = styled.ul`
    flex: 1;
    margin: 0;
    padding: 2px 0 0;
    overflow: hidden;
    border: 1px solid #828790;
    border-bottom: 0;
    background: #fff;
`

const MemberIndent = styled.i`
    width: 30px;
`

const MemberLabel = styled.div`
    display: flex;
    align-items: center;
    flex: 1;
    gap: 5px;
    height: 16px;
    background: ${(p) => (p.$selected ? '#2f62bd' : 'none')};
`

const PropertyPane = styled.div`
    display: flex;
    flex-direction: column;
    flex: 1;
    min-width: 0;
    margin: 0 3px 3px 5px;
    border: 1px solid #c8c8c8;
    border-width: 0 1px 1px 0;
    background: #fff;
`

const TabStrip = styled.div`
    display: flex;
    height: 20px;
    border-bottom: 1px solid #dcdcdc;
`

const Tab = styled.button`
    padding: 0 7px;
    border: 1px solid #dcdcdc;
    border-width: 1px 1px 0 0;
    background: ${(p) => (p.$active ? '#fff' : '#f0f0f0')};
`

const PropertyFrame = styled.div`
    display: flex;
    flex: 1;
    justify-content: space-between;
    margin: 6px 4px 1px 3px;
    border: 1px solid #9a9a9a;
`

const PropertyTable = styled.table`
    table-layout: fixed;
    width: 370px;
    border-collapse: collapse;
    td { height: 20px; padding: 0 2px; border: 1px solid #c8c8c8; line-height: 14px; }
`

const HeadCell = styled.th`
    width: ${(p) => p.$w}px;
    height: 22px;
    padding: 0;
    border: 1px solid #c8c8c8;
    border-top: 0;
    border-left: 0;
    font-weight: 400;
    color: ${(p) => (p.$hot ? '#7a0000' : '#000')};
    background: ${(p) => (p.$hot ? 'linear-gradient(#f9d79c, #f2c05c)' : 'linear-gradient(#fff, #f1f1f1)')};
`

const IndexCell = styled.td`
    background: #ffd08c;
    color: #a00000;
    text-align: center;
`

const NameCell = styled.td`
    background: #0078d7;
    color: #fff;
    text-indent: 18px;
`

const ValueCell = styled.td`
    background: #dcebf9;
`

const StatusBar = styled.footer`
    display: flex;
    flex: none;
    gap: 3px;
    height: 5px;
    padding-top: 2px;
`

const Status = styled.div`
    flex: ${(p) => (p.$w ? `0 0 ${p.$w}px` : 1)};
    border: 1px solid #d4d4d4;
    border-bottom: 0;
    background: #fff;
`

const SectionWindow = styled.section`
    position: absolute;
    left: 466px;
    top: 170px;
    bottom: 6px;
    width: 717px;
    display: flex;
    flex-direction: column;
    padding: 0 8px;
    border: 1px solid #4d5a68;
    border-bottom: 0;
    background: linear-gradient(#bccbda, #d8e4f1 31px);
`

const SectionTitle = styled.div`
    height: 30px;
    padding-top: 10px;
    color: #8b939c;
    text-indent: -2px;
`

const SectionBody = styled.div`
    display: flex;
    flex-direction: column;
    flex: 1;
    min-height: 0;
    padding: 0 3px 0 2px;
    background: #f0f0f0;
`

const SectionTabs = styled.div`
    display: flex;
    height: 21px;
    margin-left: -2px;
    border-bottom: 1px solid #dcdcdc;
    ${Tab} { width: 44px; padding: 2px 3px 0; text-align: left; }
    ${Tab}:first-child { width: 49px; padding: 0 5px; border-color: #fff; }
`

const SectionTools = styled.div`
    ${bar}
    height: 31px;
    gap: 7px;
    padding-left: 5px;
    border-top: 3px solid #fff;
    ${More} { padding-right: 4px; }
`

const Grip = styled.i`
    width: 2px;
    height: 16px;
    margin-right: -3px;
    background: repeating-linear-gradient(#b0b0b0 0 2px, transparent 2px 4px);
`

const OffsetRow = styled.div`
    ${bar}
    height: 28px;
    gap: 5px;
    padding-left: 5px;
`

const Modes = styled.div`
    display: flex;
    gap: 10px;
    width: 182px;
    height: 22px;
    background: #f1f1f1;
    label { display: flex; align-items: center; gap: 8px; }
`

const Radio = styled.input`
    appearance: none;
    width: 11px;
    height: 11px;
    margin: 0;
    border: 1px solid #777;
    border-radius: 50%;
    background: #fff;
    &:checked { border-color: #333; background: radial-gradient(#111 0 3px, #fff 3px); }
`

const OffsetLabel = styled.label`
    display: flex;
    align-items: center;
    gap: 6px;
    margin-right: 7px;
`

const Spin = styled.span`
    display: flex;
    width: 78px;
    height: 24px;
    border: 1px solid #7a7a7a;
    background: #f7f7f7;
    input { flex: 1; min-width: 0; padding: 0 4px; border: 0; background: none; color: #838383; text-align: right; }
`

const Arrows = styled.span`
    display: flex;
    flex-direction: column;
    justify-content: space-around;
    width: 14px;
    align-items: center;
    color: #666;
`

const Drawing = styled.svg`
    flex: 1 1 0;
    width: 100%;
    min-height: 0;
    background: #000;
`

const PlainDims = styled.g`
    fill: #c0c0c0;
    font: 12px 'Liberation Sans', sans-serif;
    text-anchor: middle;
`

const BoldDims = styled.g`
    fill: #1fe01f;
    font: bold 14px 'DejaVu Sans Mono', monospace;
    text-anchor: middle;
`

const DynamicBar = styled.div`
    flex: 0 0 26px;
`

const DynamicButton = styled.button`
    height: 26px;
    width: 62px;
    background: #f8f8f8;
`

const GridWindow = styled.section`
    position: absolute;
    left: 178px;
    top: 308px;
    width: 411px;
    border: 1px solid #3c8ad6;
    background: #f0f0f0;
    box-shadow: 0 4px 14px rgba(0, 0, 0, .35);
`

const GridTitle = styled.div`
    display: flex;
    align-items: center;
    justify-content: space-between;
    height: 25px;
    padding: 0 9px 0 3px;
    background: #fff;
`

const GridBody = styled.div`
    padding: 15px 14px 8px 13px;
`

const Group = styled.fieldset`
    margin: 0 0 8px;
    padding: 3px 8px 6px 7px;
    border: 1px solid #dcdcdc;
    legend { padding: 0; height: 14px; line-height: 14px; padding-right: 3px; }
`

const GapInput = styled.textarea`
    display: block;
    width: 100%;
    height: 41px;
    padding: 1px 2px;
    resize: none;
    outline: 0;
    border: 1px solid #7a7a7a;
    font-family: 'Liberation Mono', monospace;
    font-size: 10px;
    &:focus { border-color: #0f6cbd; }
    &::selection { background: #0078d7; color: #fff; }
`

const Actions = styled.div`
    display: flex;
    justify-content: flex-end;
    gap: 15px;
    padding-top: 4px;
`

const ActionButton = styled.button`
    width: 72px;
    height: 23px;
    border: 1px solid #adadad;
    background: #e1e1e1;
`

const ImeBar = styled.div`
    position: absolute;
    left: 600px;
    top: 3px;
    width: 186px;
    height: 24px;
    display: flex;
    align-items: center;
    justify-content: space-between;
    padding: 0 3px 0 11px;
    border: 1px solid #c3cad4;
    background: #fff;
    b { color: #2a74bf; font-size: 15px; }
`

const ImeLogo = styled.svg`
    position: absolute;
    left: -22px;
    top: -4px;
    width: 28px;
    height: 28px;
`

const SpeedBall = styled.div`
    position: absolute;
    left: 934px;
    top: -28px;
    width: 46px;
    height: 46px;
    padding-top: 25px;
    border: 2px solid #e9e9e9;
    border-radius: 50%;
    background: #35b558;
    box-shadow: 0 1px 3px #777;
    color: #fff;
    font-weight: 700;
    text-align: center;
`

const PointWindow = styled.div`
    position: absolute;
    left: 1222px;
    top: 45px;
    width: 52px;
    background: #fff;
    box-shadow: 0 2px 8px rgba(0, 0, 0, .4);
`

const PointTitle = styled.div`
    display: flex;
    align-items: center;
    justify-content: space-between;
    height: 25px;
    padding-left: 3px;
    color: #909090;
`

const PointClose = styled.button`
    width: 19px;
    height: 19px;
    background: #d6d6d6;
`

const StartButton = styled.button`
    width: 100%;
    height: 23px;
    border: 2px solid #6a6a6a;
    border-top-width: 1px;
    border-left-width: 1px;
    background: #f0f0f0;
`
